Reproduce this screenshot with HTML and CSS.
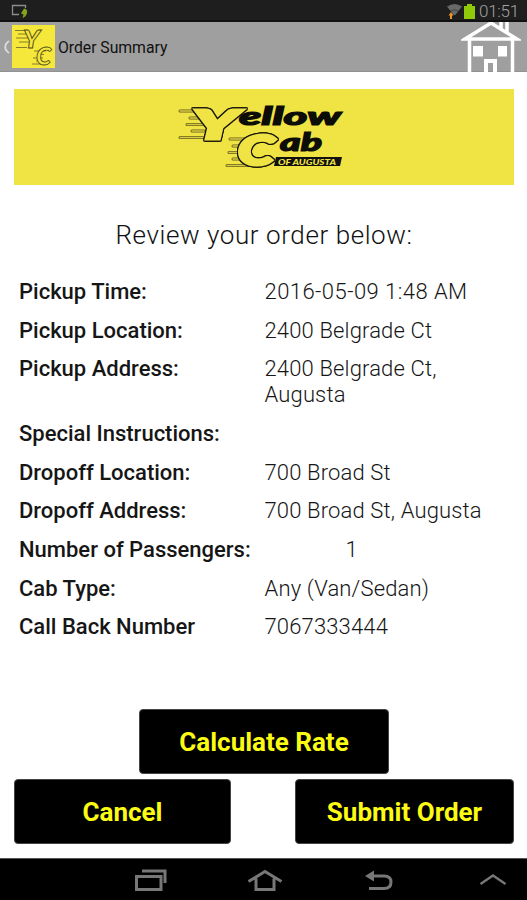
FILE: index.html
```html
<!DOCTYPE html>
<html lang="en">
<head>
<meta charset="utf-8">
<title>Order Summary</title>
<link rel="stylesheet" href="styles.css">
</head>
<body>
<div class="screen">
  <div class="status">
    <svg class="status-left" width="20" height="18" viewBox="0 0 20 18"><path d="M9 12.500H2.500V3.500H15.500V6" fill="none" stroke="#8c8c8c" stroke-width="1.300"/><path d="M14 6.500q4 .5 3 4.500q-1 4-4.500 5l1-3.500l-2.500-1z" fill="#83a51c"/></svg>
    <div class="status-right">
      <svg width="17" height="18" viewBox="0 0 17 18"><path d="M1 4.500Q8.500-.5 16 4.500L9.300 13H7.700z" fill="#686868"/><path d="M5 9Q8.500 6.500 12 9" stroke="#404040" fill="none"/><path d="M5 10l2.500 3.500H6V17H4v-3.500H2.500z" fill="#e9942c"/></svg>
      <svg width="11" height="16" viewBox="0 0 11 16"><path d="M3 1h5v2h3v13H0V3h3z" fill="#91c90b"/></svg>
      <span class="clock">01:51</span>
    </div>
  </div>
  <header class="bar">
    <svg class="back" width="6" height="14" viewBox="0 0 6 14"><path d="M5 1Q1 4 1.300 7Q1 10 5 13" fill="none" stroke="#ddd" stroke-width="1.700"/></svg>
    <svg class="app-icon" width="43" height="43" viewBox="0 0 43 43">
      <rect width="43" height="43" fill="#f6e83b"/>
      <g stroke="#776f26" stroke-width=".9"><path d="M3 5.500H14M6 9H15M4 13H17M7 17H17M4 22.500H15M22 26H34M25 29.500H32M21 33H31M24 36H31M20 39H32"/></g>
      <g class="small-mark"><text x="11" y="22.500" textLength="17" lengthAdjust="spacingAndGlyphs">Y</text><text x="24" y="39.500" textLength="15" lengthAdjust="spacingAndGlyphs">C</text></g>
    </svg>
    <h1>Order Summary</h1>
    <svg class="house" width="60" height="50" viewBox="0 0 60 50"><g fill="none" stroke="#fff" stroke-width="3.500"><path d="M4 17L30 1L56 17zM8.500 18V50M51.500 18V50M40 0V7M46 0V11" /><path d="M25 50V39H34V50" stroke-width="4"/></g><path d="M12 24H22V34.500H12zM37 24H46V34.500H37z" fill="#fff"/></svg>
  </header>
  <main>
    <div class="banner">
      <svg width="200" height="96" viewBox="0 0 200 96">
        <g stroke="#69611b" stroke-width="3" stroke-linecap="round"><path d="M20 22H43M30 29H44M27 35.500H50M32 42H44M20 48.500H43M70 50H92M73 57H84M69 63.500H84M73 70H86M67 76.500H90"/></g>
        <g stroke="#d9ca42" stroke-width="1.300" stroke-linecap="round"><path d="M20 22H43M30 29H44M27 35.500H50M32 42H44M20 48.500H43M70 50H92M73 57H84M69 63.500H84M73 70H86M67 76.500H90"/></g>
        <g class="mark"><text x="33" y="49.500" font-size="39" textLength="45" lengthAdjust="spacingAndGlyphs">Y</text><text x="78" y="76" font-size="41" textLength="36" lengthAdjust="spacingAndGlyphs">C</text></g>
        <g class="word"><text x="79" y="36" textLength="102" lengthAdjust="spacingAndGlyphs">ellow</text><text x="120" y="62" textLength="42" lengthAdjust="spacingAndGlyphs">ab</text></g>
        <path d="M116 68H182L180 77H114z" fill="#111"/>
        <text class="city" x="118" y="75.500" textLength="58" lengthAdjust="spacingAndGlyphs">OF AUGUSTA</text>
      </svg>
    </div>
    <h2>Review your order below:</h2>
    <dl>
      <dt>Pickup Time:</dt><dd class="date">2016-05-09 1:48 AM</dd>
      <dt>Pickup Location:</dt><dd>2400 Belgrade Ct</dd>
      <dt>Pickup Address:</dt><dd>2400 Belgrade Ct,<br>Augusta</dd>
      <dt>Special Instructions:</dt><dd></dd>
      <dt>Dropoff Location:</dt><dd>700 Broad St</dd>
      <dt>Dropoff Address:</dt><dd>700 Broad St, Augusta</dd>
      <dt>Number of Passengers:</dt><dd class="count">1</dd>
      <dt>Cab Type:</dt><dd>Any (Van/Sedan)</dd>
      <dt>Call Back Number</dt><dd>7067333444</dd>
    </dl>
    <div class="actions">
      <button class="rate">Calculate Rate</button>
      <div class="pair"><button class="cancel">Cancel</button><button class="submit">Submit Order</button></div>
    </div>
  </main>
  <nav>
    <svg width="34" height="24" viewBox="0 0 34 24"><path d="M2.500 8.500H27V21.500H2.500zM8 3H31V15" fill="none" stroke="#777" stroke-width="3"/></svg>
    <svg width="36" height="24" viewBox="0 0 36 24"><path d="M1.500 13.500L18 3.500L34.500 13.500M9 10.500V21.500H27V10.500" fill="none" stroke="#777" stroke-width="3"/></svg>
    <svg width="30" height="24" viewBox="0 0 30 24"><path d="M7 8H20Q27 8 27 14Q27 20.500 20 20.500H5" fill="none" stroke="#777" stroke-width="3"/><path d="M1 8L10 2.500V13.500z" fill="#777"/></svg>
    <svg width="28" height="24" viewBox="0 0 28 24"><path d="M1.500 16L14 7.500L26.500 16" fill="none" stroke="#777" stroke-width="2.300"/></svg>
  </nav>
</div>
</body>
</html>
```
FILE: styles.css
```css
* { box-sizing: border-box; }
body { margin: 0; background: #fff; color: #161616; font-family: Roboto, "Liberation Sans", sans-serif; }
.screen { width: 527px; height: 900px; display: flex; flex-direction: column; overflow: hidden; }
svg { display: block; flex: none; }
.status { height: 22px; flex: none; background: #1e1e1e; border-bottom: 2px solid #111; display: flex; justify-content: space-between; padding: 2px 8px 0 10px; }
.status-right { display: flex; align-items: center; }
.status-right svg + svg { margin-left: 1px; }
.clock { width: 40px; margin-left: 4px; font-size: 17px; font-weight: 300; line-height: 19px; color: #a2a2a2; letter-spacing: -.3px; white-space: nowrap; }
.bar { height: 50px; flex: none; background: #9f9f9f; border-bottom: 1px solid #929292; display: flex; align-items: center; padding-left: 4px; }
.back { margin-right: 2px; }
.app-icon { margin-right: 3px; }
.bar h1 { margin: 2px 0 0; font-size: 15.800px; font-weight: 400; color: #111; letter-spacing: -.05px; }
.house { margin: 0 6px 0 auto; }
.mark, .small-mark { font-family: Lato, "Liberation Sans", sans-serif; font-weight: 900; font-style: italic; }
.mark text { fill: #f0e344; stroke: #f0e344; stroke-width: 3; filter: drop-shadow(1px 0 0 #17160c) drop-shadow(-1px 0 0 #17160c) drop-shadow(0 1px 0 #17160c) drop-shadow(0 -1px 0 #17160c); }
.small-mark { font-size: 24px; fill: #f6e83b; stroke: #4a451b; stroke-width: .8; }
.word { font: italic 900 25px Lato, sans-serif; fill: #0d0d08; stroke: #0d0d08; stroke-width: 1.200; }
.city { font: italic 900 8px Lato, sans-serif; fill: #f0e344; }
main { flex: 1; padding: 17px 13px 0 14px; }
.banner { height: 96px; background: #f0e344; display: flex; padding-left: 146px; }
h2 { margin: 34px 0 0; font-size: 26px; line-height: 32px; font-weight: 300; text-align: center; letter-spacing: .58px; color: #111; }
dl { margin: 28px 0 0 5px; display: grid; grid-template-columns: 245.500px 1fr; row-gap: 13px; font-size: 22px; line-height: 25.700px; }
dt { font-weight: 500; letter-spacing: 0; white-space: nowrap; }
dd { margin: 0; font-weight: 300; letter-spacing: .15px; white-space: nowrap; }
.date { letter-spacing: .45px; }
.count { padding-left: 81px; }
.actions { margin-top: 69px; display: flex; flex-direction: column; align-items: center; gap: 5px; }
.pair { width: 100%; display: flex; justify-content: space-between; }
button { height: 65px; padding: 0; border: 1px solid #444; border-radius: 4px; background: #000; color: #fbfb14; font: 700 26px Roboto, sans-serif; }
.rate { width: 250px; }
.cancel { width: 217px; }
.submit { width: 219px; }
nav { height: 42px; flex: none; background: #000; border-top: 1px solid #555; display: grid; grid-template-columns: 33px 37px 35px 28px; column-gap: 80px; padding: 9px 0 0 134px; }
```
